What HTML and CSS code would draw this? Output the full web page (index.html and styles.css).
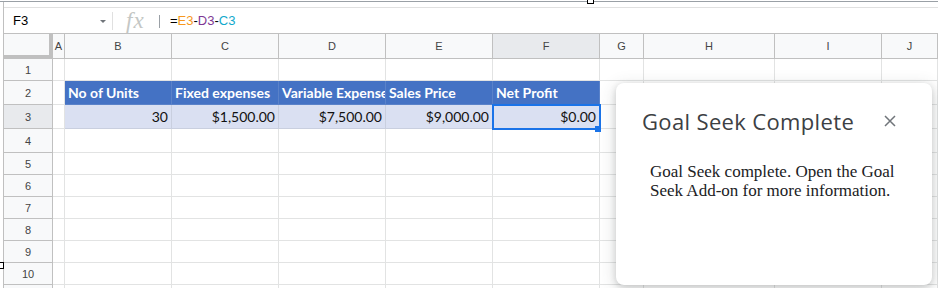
FILE: index.html
```html
<!DOCTYPE html>
<html lang="en">

<head>
    <meta charset="UTF-8">
    <meta name="viewport" content="width=device-width, initial-scale=1.0">
    <title>Goal Seek</title>
    <link rel="stylesheet" href="styles.css">
</head>

<body>

    <div class="rule"></div>

    <div class="app">
        <!-- Barra de fórmulas -->
        <div class="formula-bar">
            <div class="name-box"><span>F3</span><span class="caret"></span></div>
            <div class="sep"></div>
            <div class="fx">fx</div>
            <div class="sep sep-short"></div>
            <div class="formula">=<span class="ref-e">E3</span>-<span class="ref-d">D3</span>-<span class="ref-c">C3</span></div>
        </div>

        <!-- Hoja -->
        <div class="sheet">
            <div class="corner"></div>
            <div class="col-hdr">A</div>
            <div class="col-hdr">B</div>
            <div class="col-hdr">C</div>
            <div class="col-hdr">D</div>
            <div class="col-hdr">E</div>
            <div class="col-hdr active">F</div>
            <div class="col-hdr">G</div>
            <div class="col-hdr">H</div>
            <div class="col-hdr">I</div>
            <div class="col-hdr">J</div>

            <div class="row-hdr">1</div>
            <div class="cell"></div><div class="cell"></div><div class="cell"></div><div class="cell"></div><div class="cell"></div>
            <div class="cell"></div><div class="cell"></div><div class="cell"></div><div class="cell"></div><div class="cell"></div>

            <div class="row-hdr">2</div>
            <div class="cell"></div>
            <div class="cell th">No of Units</div>
            <div class="cell th">Fixed expenses</div>
            <div class="cell th">Variable Expenses</div>
            <div class="cell th">Sales Price</div>
            <div class="cell th">Net Profit</div>
            <div class="cell"></div><div class="cell"></div><div class="cell"></div><div class="cell"></div>

            <div class="row-hdr active">3</div>
            <div class="cell"></div>
            <div class="cell td">30</div>
            <div class="cell td">$1,500.00</div>
            <div class="cell td">$7,500.00</div>
            <div class="cell td">$9,000.00</div>
            <div class="cell td selected">$0.00</div>
            <div class="cell"></div><div class="cell"></div><div class="cell"></div><div class="cell"></div>

            <div class="row-hdr">4</div>
            <div class="cell"></div><div class="cell"></div><div class="cell"></div><div class="cell"></div><div class="cell"></div>
            <div class="cell"></div><div class="cell"></div><div class="cell"></div><div class="cell"></div><div class="cell"></div>

            <div class="row-hdr">5</div>
            <div class="cell"></div><div class="cell"></div><div class="cell"></div><div class="cell"></div><div class="cell"></div>
            <div class="cell"></div><div class="cell"></div><div class="cell"></div><div class="cell"></div><div class="cell"></div>

            <div class="row-hdr">6</div>
            <div class="cell"></div><div class="cell"></div><div class="cell"></div><div class="cell"></div><div class="cell"></div>
            <div class="cell"></div><div class="cell"></div><div class="cell"></div><div class="cell"></div><div class="cell"></div>

            <div class="row-hdr">7</div>
            <div class="cell"></div><div class="cell"></div><div class="cell"></div><div class="cell"></div><div class="cell"></div>
            <div class="cell"></div><div class="cell"></div><div class="cell"></div><div class="cell"></div><div class="cell"></div>

            <div class="row-hdr">8</div>
            <div class="cell"></div><div class="cell"></div><div class="cell"></div><div class="cell"></div><div class="cell"></div>
            <div class="cell"></div><div class="cell"></div><div class="cell"></div><div class="cell"></div><div class="cell"></div>

            <div class="row-hdr">9</div>
            <div class="cell"></div><div class="cell"></div><div class="cell"></div><div class="cell"></div><div class="cell"></div>
            <div class="cell"></div><div class="cell"></div><div class="cell"></div><div class="cell"></div><div class="cell"></div>

            <div class="row-hdr">10</div>
            <div class="cell"></div><div class="cell"></div><div class="cell"></div><div class="cell"></div><div class="cell"></div>
            <div class="cell"></div><div class="cell"></div><div class="cell"></div><div class="cell"></div><div class="cell"></div>

            <!-- fila 11, solo asoma el borde -->
            <div class="row-hdr"></div>
            <div class="cell"></div><div class="cell"></div><div class="cell"></div><div class="cell"></div><div class="cell"></div>
            <div class="cell"></div><div class="cell"></div><div class="cell"></div><div class="cell"></div><div class="cell"></div>
        </div>
    </div>

    <!-- Diálogo del complemento -->
    <div class="dialog">
        <div class="dialog-head">
            <span class="dialog-title">Goal Seek Complete</span>
            <svg class="close" width="12" height="12" viewBox="0 0 12 12">
                <path d="M1 1L11 11M11 1L1 11" stroke="#70757a" stroke-width="1.5" fill="none"/>
            </svg>
        </div>
        <div class="dialog-body">Goal Seek complete. Open the Goal Seek Add-on for more information.</div>
    </div>

    <!-- Marcas de recorte de la captura -->
    <div class="handle handle-top"></div>
    <div class="handle handle-left"></div>

</body>

</html>
```

FILE: styles.css
```css
body {
    margin: 0;
    padding: 0;
    background-color: #fff;
    font-family: 'Liberation Sans', Arial, sans-serif;
    overflow: hidden;
    color: #000;
}

.rule {
    margin-top: 1px;
    border-top: 1px solid #9aa0a6;
}

.app {
    margin-left: 3px;
    border-left: 1px solid #c0c0c0;
    padding-top: 5px;
}

/* Barra de fórmulas */
.formula-bar {
    box-sizing: border-box;
    height: 27px;
    border-top: 1px solid #e0e0e0;
    border-bottom: 1px solid #c0c0c0;
    display: flex;
    align-items: center;
}

.name-box {
    box-sizing: border-box;
    width: 108px;
    padding-left: 9px;
    padding-right: 6px;
    display: flex;
    align-items: center;
    justify-content: space-between;
    font-size: 13px;
}

.caret {
    width: 0;
    height: 0;
    border-left: 3px solid transparent;
    border-right: 3px solid transparent;
    border-top: 3px solid #70757a;
    margin-top: 2px;
}

.sep {
    width: 1px;
    height: 18px;
    background-color: #e0e0e0;
}

.sep-short {
    height: 13px;
    background-color: #9aa0a6;
    margin-top: 1px;
}

.fx {
    box-sizing: border-box;
    width: 46px;
    padding-left: 13px;
    font-family: 'Liberation Serif', serif;
    font-style: italic;
    font-size: 23px;
    color: #c4c7c5;
    letter-spacing: 1px;
    line-height: 20px;
}

.formula {
    padding-left: 10px;
    font-size: 13px;
}

.ref-e { color: #f7981d; }
.ref-d { color: #7e3794; }
.ref-c { color: #11a9cc; }

/* Hoja */
.sheet {
    display: grid;
    grid-template-columns: 49px 12px 107px 107px 107px 107px 107px 44px 131px 107px 1fr;
    grid-template-rows: 25px 22px 24px 24px 24px repeat(7, 22px);
}

.sheet > div {
    box-sizing: border-box;
    border-right: 1px solid #e2e3e3;
    border-bottom: 1px solid #e2e3e3;
}

.sheet > .corner {
    background-color: #f8f9fa;
    border-right: 4px solid #c0c0c0;
    border-bottom: 4px solid #c0c0c0;
}

.sheet > .col-hdr,
.sheet > .row-hdr {
    background-color: #f8f9fa;
    border-right: 1px solid #c0c0c0;
    border-bottom: 1px solid #c0c0c0;
    color: #444;
    font-size: 11px;
    display: flex;
    align-items: center;
    justify-content: center;
}

.sheet > .active {
    background-color: #e8eaed;
}

.cell {
    font-family: Lato, 'Liberation Sans', sans-serif;
    font-size: 14px;
    white-space: nowrap;
    overflow: hidden;
    display: flex;
    align-items: center;
    padding: 0 3px;
}

.sheet > .th {
    background-color: #4472c4;
    color: #fff;
    font-weight: bold;
    border-right-color: #5a82c9;
    border-bottom-color: #5a82c9;
}

.sheet > .td {
    background-color: #dae0f2;
    justify-content: flex-end;
    color: #111;
    border-right-color: #c9cfdf;
    border-bottom-color: #c9cfdf;
}

.selected {
    position: relative;
    overflow: visible;
}

.selected::after {
    content: '';
    position: absolute;
    top: -1px;
    left: -1px;
    right: -2px;
    bottom: -2px;
    border: 2px solid #1a73e8;
}

.selected::before {
    content: '';
    position: absolute;
    left: 102px;
    top: 21px;
    width: 6px;
    height: 6px;
    background-color: #1a73e8;
    z-index: 1;
}

/* Diálogo */
.dialog {
    position: absolute;
    left: 616px;
    top: 83px;
    width: 316px;
    height: 202px;
    background-color: #fff;
    border-radius: 8px;
    box-shadow: 0 2px 6px rgba(60, 64, 67, 0.2), 0 4px 16px 2px rgba(60, 64, 67, 0.15);
}

.dialog-head {
    display: flex;
    align-items: center;
    justify-content: space-between;
    padding: 23px 36px 0 26px;
    height: 30px;
}

.dialog-title {
    font-family: 'Open Sans', sans-serif;
    font-size: 22px;
    letter-spacing: 0.35px;
    line-height: 30px;
    color: #3c4043;
}

.dialog-body {
    margin-top: 18px;
    padding: 8px 20px 8px 34px;
    font-family: 'Liberation Serif', serif;
    font-size: 17px;
    line-height: 19px;
    color: #202124;
}

/* Marcas de la captura */
.handle {
    position: absolute;
    width: 5px;
    height: 5px;
    background-color: #fff;
    border: 1px solid #000;
}

.handle-top {
    left: 587px;
    top: -3px;
}

.handle-left {
    left: -3px;
    top: 262px;
}
```
